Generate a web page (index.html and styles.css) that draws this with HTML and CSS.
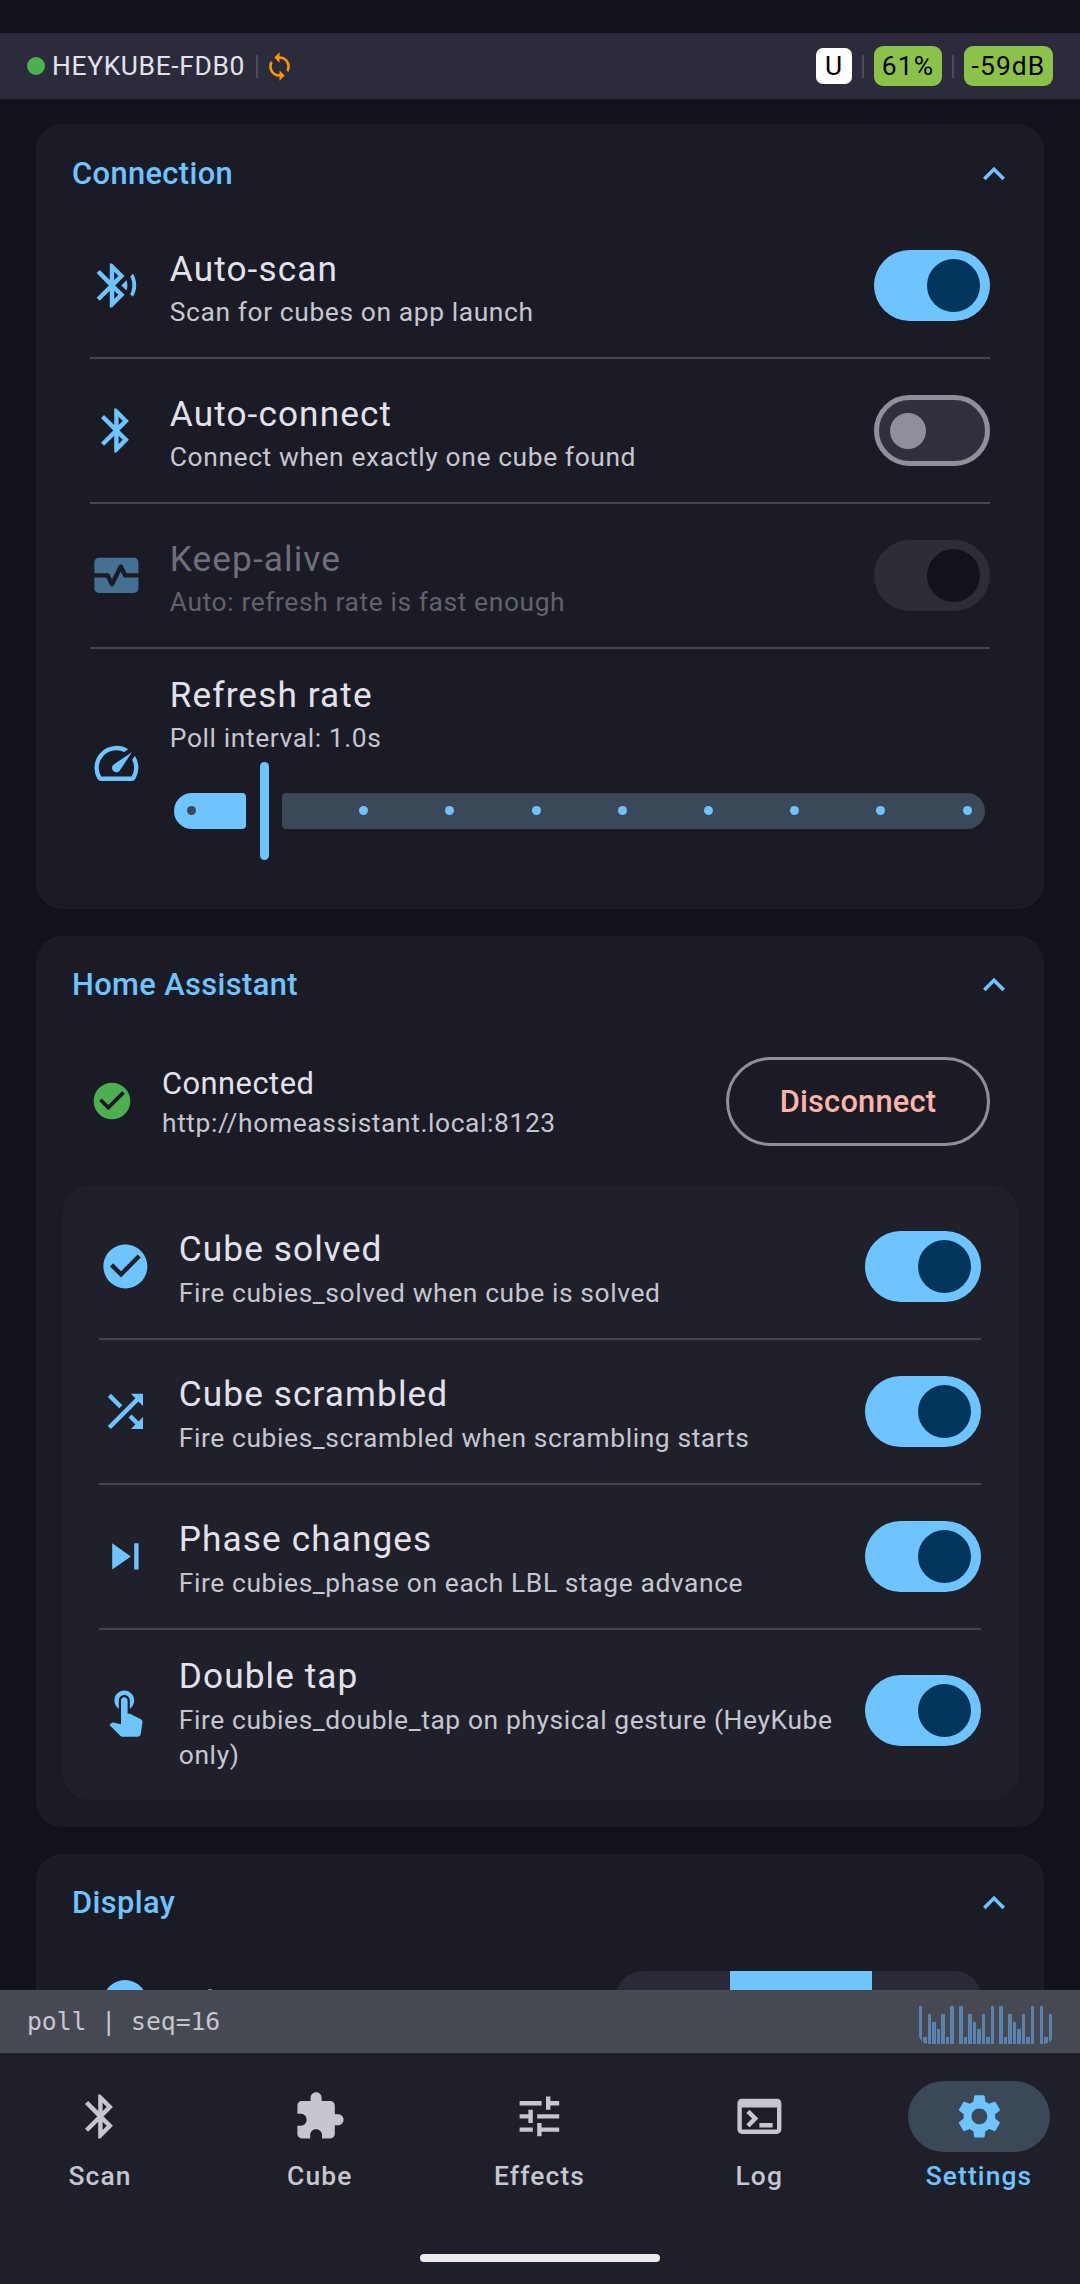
FILE: index.html
```html
<!DOCTYPE html>
<html lang="en">
  <head>
    <meta charset="UTF-8" />
    <meta name="viewport" content="width=device-width, initial-scale=1.0" />
    <title>Settings</title>
    <link rel="stylesheet" href="styles.css">
  </head>
  <body>
    <header class="TopBar">
      <span class="StatusDot"></span>
      <span class="DeviceName">HEYKUBE-FDB0</span>
      <span class="BarDivider"></span>
      <svg class="SyncIcon" viewBox="0 0 24 24"><path d="M12 4V1L8 5l4 4V6c3.31 0 6 2.69 6 6 0 1.01-.25 1.97-.7 2.8l1.46 1.46C19.54 15.03 20 13.57 20 12c0-4.42-3.58-8-8-8zm0 14c-3.31 0-6-2.69-6-6 0-1.01.25-1.97.7-2.8L5.24 7.74C4.46 8.97 4 10.43 4 12c0 4.42 3.58 8 8 8v3l4-4-4-4v3z"/></svg>
      <span class="TopBarRight">
        <span class="Badge BadgeWhite">U</span>
        <span class="BarDivider"></span>
        <span class="Badge BadgeGreen BadgeBattery">61%</span>
        <span class="BarDivider"></span>
        <span class="Badge BadgeGreen BadgeSignal">-59dB</span>
      </span>
    </header>

    <main class="Content">
      <section class="Card">
        <div class="CardHeader">
          <h2 class="CardTitle">Connection</h2>
          <svg class="Chevron" viewBox="0 0 24 24"><path d="M12 8l-6 6 1.41 1.41L12 10.83l4.59 4.58L18 14z"/></svg>
        </div>
        <div class="RowList">
          <div class="Row">
            <svg class="RowIcon" viewBox="0 0 24 24"><path d="M14.24 12.01l2.32 2.32c.28-.72.44-1.51.44-2.33 0-.82-.16-1.59-.43-2.31l-2.33 2.32zm5.29-5.3l-1.26 1.26c.63 1.21.98 2.57.98 4.02s-.36 2.82-.98 4.02l1.2 1.2c.97-1.54 1.54-3.36 1.54-5.31-.01-1.89-.55-3.67-1.48-5.19zm-3.82 1L10 2H9v7.59L4.41 5 3 6.41 8.59 12 3 17.59 4.41 19 9 14.41V22h1l5.71-5.71-4.3-4.29 4.3-4.29zM11 5.83l1.88 1.88L11 9.59V5.83zm1.88 10.46L11 18.17v-3.76l1.88 1.88z"/></svg>
            <div class="RowText">
              <div class="RowTitle">Auto-scan</div>
              <div class="RowSub">Scan for cubes on app launch</div>
            </div>
            <div class="Switch SwitchOn"><span class="Thumb"></span></div>
          </div>
          <div class="Row">
            <svg class="RowIcon" viewBox="0 0 24 24"><path d="M17.71 7.71L12 2h-1v7.59L6.41 5 5 6.41 10.59 12 5 17.59 6.41 19 11 14.41V22h1l5.71-5.71-4.3-4.29 4.3-4.29zM13 5.83l1.88 1.88L13 9.59V5.83zm1.88 10.46L13 18.17v-3.76l1.88 1.88z"/></svg>
            <div class="RowText">
              <div class="RowTitle">Auto-connect</div>
              <div class="RowSub">Connect when exactly one cube found</div>
            </div>
            <div class="Switch SwitchOff"><span class="Thumb"></span></div>
          </div>
          <div class="Row RowDisabled">
            <svg class="RowIcon" viewBox="0 0 24 24"><path d="M15.11 12.45L14 10.24l-3.11 6.21c-.16.34-.51.55-.89.55s-.73-.21-.89-.55L7.38 13H2v5c0 1.1.9 2 2 2h16c1.1 0 2-.9 2-2v-5h-6c-.38 0-.73-.21-.89-.55z"/><path d="M20 4H4c-1.1 0-2 .9-2 2v5h6c.38 0 .73.21.89.55L10 13.76l3.11-6.21c.34-.68 1.45-.68 1.79 0L16.62 11H22V6c0-1.1-.9-2-2-2z"/></svg>
            <div class="RowText">
              <div class="RowTitle">Keep-alive</div>
              <div class="RowSub">Auto: refresh rate is fast enough</div>
            </div>
            <div class="Switch SwitchDisabled"><span class="Thumb"></span></div>
          </div>
          <div class="Row RowSlider">
            <svg class="RowIcon" viewBox="0 0 24 24"><path d="M20.38 8.57l-1.23 1.85a8 8 0 0 1-.22 7.58H5.07A8 8 0 0 1 15.58 6.85l1.85-1.23A10 10 0 0 0 3.35 19a2 2 0 0 0 1.72 1h13.85a2 2 0 0 0 1.74-1 10 10 0 0 0-.27-10.44zm-9.79 6.84a2 2 0 0 0 2.83 0l5.66-8.49-8.49 5.66a2 2 0 0 0 0 2.83z"/></svg>
            <div class="RowText">
              <div class="RowTitle">Refresh rate</div>
              <div class="RowSub">Poll interval: 1.0s</div>
              <div class="Slider">
                <div class="TrackActive"><span class="Dot DotDark"></span></div>
                <div class="Handle"></div>
                <div class="TrackRest">
                  <span class="Dot"></span>
                  <span class="Dot"></span>
                  <span class="Dot"></span>
                  <span class="Dot"></span>
                  <span class="Dot"></span>
                  <span class="Dot"></span>
                  <span class="Dot"></span>
                  <span class="Dot"></span>
                </div>
              </div>
            </div>
          </div>
        </div>
      </section>

      <section class="Card">
        <div class="CardHeader">
          <h2 class="CardTitle">Home Assistant</h2>
          <svg class="Chevron" viewBox="0 0 24 24"><path d="M12 8l-6 6 1.41 1.41L12 10.83l4.59 4.58L18 14z"/></svg>
        </div>
        <div class="ConnectedRow">
          <svg class="ConnectedIcon" viewBox="0 0 24 24"><path d="M12 2C6.48 2 2 6.48 2 12s4.48 10 10 10 10-4.48 10-10S17.52 2 12 2zm-2 15l-5-5 1.41-1.41L10 14.17l7.59-7.59L19 8l-9 9z"/></svg>
          <div class="RowText">
            <div class="ConnectedTitle">Connected</div>
            <div class="RowSub">http://homeassistant.local:8123</div>
          </div>
          <button class="DisconnectBtn">Disconnect</button>
        </div>
        <div class="InnerCard">
          <div class="Row">
            <svg class="RowIcon" viewBox="0 0 24 24"><path d="M12 2C6.48 2 2 6.48 2 12s4.48 10 10 10 10-4.48 10-10S17.52 2 12 2zm-2 15l-5-5 1.41-1.41L10 14.17l7.59-7.59L19 8l-9 9z"/></svg>
            <div class="RowText">
              <div class="RowTitle">Cube solved</div>
              <div class="RowSub">Fire cubies_solved when cube is solved</div>
            </div>
            <div class="Switch SwitchOn"><span class="Thumb"></span></div>
          </div>
          <div class="Row">
            <svg class="RowIcon" viewBox="0 0 24 24"><path d="M10.59 9.17L5.41 4 4 5.41l5.17 5.17 1.42-1.41zM14.5 4l2.04 2.04L4 18.59 5.41 20 17.96 7.46 20 9.5V4h-5.5zm.33 9.41l-1.41 1.41 3.13 3.13L14.5 20H20v-5.5l-2.04 2.04-3.13-3.13z"/></svg>
            <div class="RowText">
              <div class="RowTitle">Cube scrambled</div>
              <div class="RowSub">Fire cubies_scrambled when scrambling starts</div>
            </div>
            <div class="Switch SwitchOn"><span class="Thumb"></span></div>
          </div>
          <div class="Row">
            <svg class="RowIcon" viewBox="0 0 24 24"><path d="M6 18l8.5-6L6 6v12zM16 6v12h2V6h-2z"/></svg>
            <div class="RowText">
              <div class="RowTitle">Phase changes</div>
              <div class="RowSub">Fire cubies_phase on each LBL stage advance</div>
            </div>
            <div class="Switch SwitchOn"><span class="Thumb"></span></div>
          </div>
          <div class="Row">
            <svg class="RowIcon" viewBox="0 0 24 24"><path d="M9 11.24V7.5C9 6.12 10.12 5 11.5 5S14 6.12 14 7.5v3.74c1.21-.81 2-2.18 2-3.74C16 5.01 13.99 3 11.5 3S7 5.01 7 7.5c0 1.56.79 2.93 2 3.74zm9.84 4.63l-4.54-2.26c-.17-.07-.35-.11-.54-.11H13v-6c0-.83-.67-1.5-1.5-1.5S10 6.67 10 7.5v10.74l-3.43-.72c-.08-.01-.15-.03-.24-.03-.31 0-.59.13-.79.33l-.79.8 4.94 4.94c.27.27.65.44 1.06.44h6.79c.75 0 1.33-.55 1.44-1.28l.75-5.27c.01-.07.02-.14.02-.2 0-.62-.38-1.16-.91-1.38z"/></svg>
            <div class="RowText">
              <div class="RowTitle">Double tap</div>
              <div class="RowSub">Fire cubies_double_tap on physical gesture (HeyKube only)</div>
            </div>
            <div class="Switch SwitchOn"><span class="Thumb"></span></div>
          </div>
        </div>
      </section>

      <section class="Card">
        <div class="CardHeader">
          <h2 class="CardTitle">Display</h2>
          <svg class="Chevron" viewBox="0 0 24 24"><path d="M12 8l-6 6 1.41 1.41L12 10.83l4.59 4.58L18 14z"/></svg>
        </div>
        <div class="ThemeRow">
          <span class="ThemeIcon"></span>
          <div class="RowTitle ThemeTitle">Theme</div>
          <div class="Segments">
            <span class="Segment SegmentLeft"></span>
            <span class="Segment SegmentOn"></span>
            <span class="Segment SegmentRight"></span>
          </div>
        </div>
      </section>
    </main>

    <div class="DebugBar">
      <span class="DebugText">poll | seq=16</span>
      <div class="Spark">
        <span style="height:38px"></span><span style="height:7px"></span><span style="height:30px"></span><span style="height:22px"></span><span style="height:15px"></span><span style="height:30px"></span><span style="height:7px"></span><span style="height:38px"></span><span style="height:0"></span>
        <span style="height:38px"></span><span style="height:7px"></span><span style="height:30px"></span><span style="height:22px"></span><span style="height:15px"></span><span style="height:30px"></span><span style="height:7px"></span><span style="height:38px"></span><span style="height:0"></span>
        <span style="height:38px"></span><span style="height:7px"></span><span style="height:30px"></span><span style="height:22px"></span><span style="height:15px"></span><span style="height:30px"></span><span style="height:7px"></span><span style="height:38px"></span><span style="height:0"></span>
        <span style="height:38px"></span><span style="height:7px"></span><span style="height:30px"></span>
      </div>
    </div>

    <nav class="BottomNav">
      <div class="NavItems">
        <a class="NavItem">
          <span class="NavPill"><svg class="NavIcon" viewBox="0 0 24 24"><path d="M17.71 7.71L12 2h-1v7.59L6.41 5 5 6.41 10.59 12 5 17.59 6.41 19 11 14.41V22h1l5.71-5.71-4.3-4.29 4.3-4.29zM13 5.83l1.88 1.88L13 9.59V5.83zm1.88 10.46L13 18.17v-3.76l1.88 1.88z"/></svg></span>
          <span class="NavLabel">Scan</span>
        </a>
        <a class="NavItem">
          <span class="NavPill"><svg class="NavIcon" viewBox="0 0 24 24"><path d="M20.5 11H19V7c0-1.1-.9-2-2-2h-4V3.5C13 2.12 11.88 1 10.5 1S8 2.12 8 3.5V5H4c-1.1 0-1.99.9-1.99 2v3.8H3.5c1.49 0 2.7 1.21 2.7 2.7s-1.21 2.7-2.7 2.7H2V20c0 1.1.9 2 2 2h3.8v-1.5c0-1.49 1.21-2.7 2.7-2.7 1.49 0 2.7 1.21 2.7 2.7V22H17c1.1 0 2-.9 2-2v-4h1.5c1.38 0 2.5-1.12 2.5-2.5S21.88 11 20.5 11z"/></svg></span>
          <span class="NavLabel">Cube</span>
        </a>
        <a class="NavItem">
          <span class="NavPill"><svg class="NavIcon" viewBox="0 0 24 24"><path d="M3 17v2h6v-2H3zM3 5v2h10V5H3zm10 16v-2h8v-2h-8v-2h-2v6h2zM7 9v2H3v2h4v2h2V9H7zm14 4v-2H11v2h10zm-6-4h2V7h4V5h-4V3h-2v6z"/></svg></span>
          <span class="NavLabel">Effects</span>
        </a>
        <a class="NavItem">
          <span class="NavPill"><svg class="NavIcon" viewBox="0 0 24 24"><path d="M20 4H4c-1.11 0-2 .9-2 2v12c0 1.1.89 2 2 2h16c1.1 0 2-.9 2-2V6c0-1.1-.9-2-2-2zm0 14H4V8h16v10zm-2-1h-6v-2h6v2zM7.5 17l-1.41-1.41L8.67 13l-2.59-2.59L7.5 9l4 4-4 4z"/></svg></span>
          <span class="NavLabel">Log</span>
        </a>
        <a class="NavItem NavActive">
          <span class="NavPill"><svg class="NavIcon" viewBox="0 0 24 24"><path d="M19.14 12.94c.04-.3.06-.61.06-.94 0-.32-.02-.64-.07-.94l2.03-1.58c.18-.14.23-.41.12-.61l-1.92-3.32c-.12-.22-.37-.29-.59-.22l-2.39.96c-.5-.38-1.03-.7-1.62-.94l-.36-2.54c-.04-.24-.24-.41-.48-.41h-3.84c-.24 0-.43.17-.47.41l-.36 2.54c-.59.24-1.13.57-1.62.94l-2.39-.96c-.22-.08-.47 0-.59.22L2.74 8.87c-.12.21-.08.47.12.61l2.03 1.58c-.05.3-.09.63-.09.94s.02.64.07.94l-2.03 1.58c-.18.14-.23.41-.12.61l1.92 3.32c.12.22.37.29.59.22l2.39-.96c.5.38 1.03.7 1.62.94l.36 2.54c.05.24.24.41.48.41h3.84c.24 0 .44-.17.47-.41l.36-2.54c.59-.24 1.13-.56 1.62-.94l2.39.96c.22.08.47 0 .59-.22l1.92-3.32c.12-.22.07-.47-.12-.61l-2.01-1.58zM12 15.6c-1.98 0-3.6-1.62-3.6-3.6s1.62-3.6 3.6-3.6 3.6 1.62 3.6 3.6-1.62 3.6-3.6 3.6z"/></svg></span>
          <span class="NavLabel">Settings</span>
        </a>
      </div>
      <div class="HomeBar"></div>
    </nav>
  </body>
</html>
```

FILE: styles.css
```css
* {
  margin: 0;
  padding: 0;
  box-sizing: border-box;
}

body {
  width: 1080px;
  height: 2284px;
  display: flex;
  flex-direction: column;
  overflow: hidden;
  font-family: Roboto, "Noto Sans", sans-serif;
  background-color: #11121a;
  color: #e3e2ec;
  padding-top: 33px;
}

svg {
  fill: currentColor;
  flex-shrink: 0;
  display: block;
}

/* top bar */
.TopBar {
  height: 66px;
  flex-shrink: 0;
  display: flex;
  align-items: center;
  padding: 0 27px;
  background-color: #2b2b3b;
}

.StatusDot {
  width: 18px;
  height: 18px;
  border-radius: 50%;
  background-color: #4caf50;
  margin-right: 7px;
}

.DeviceName {
  font-size: 26.4px;
  letter-spacing: 0.65px;
  color: #e3e2ec;
}

.BarDivider {
  width: 2px;
  height: 23px;
  background-color: #4a4b5a;
  margin: 0 10px;
}

.TopBar > .BarDivider {
  margin: 0 9px 0 11px;
}

.SyncIcon {
  width: 31px;
  height: 31px;
  color: #ff9800;
  margin-left: -3px;
}

.TopBarRight {
  margin-left: auto;
  display: flex;
  align-items: center;
}

.Badge {
  display: flex;
  align-items: center;
  justify-content: center;
  color: #000;
  font-size: 26.4px;
  letter-spacing: 1.1px;
}

.BadgeWhite {
  width: 36px;
  height: 36px;
  background-color: #fff;
  border-radius: 7px;
}

.BadgeGreen {
  height: 40px;
  background-color: #8bc34a;
  border-radius: 9px;
}

.BadgeBattery {
  width: 68px;
}

.BadgeSignal {
  width: 89px;
}

/* scroll area */
.Content {
  flex: 1;
  min-height: 0;
  overflow: hidden;
  padding: 25px 36px 0;
  display: flex;
  flex-direction: column;
  gap: 27px;
}

.Card {
  flex-shrink: 0;
  background-color: #1a1b24;
  border-radius: 26px;
  padding-bottom: 27px;
}

.CardHeader {
  height: 90px;
  display: flex;
  align-items: flex-start;
  justify-content: space-between;
  padding: 27.5px 28px 0 36px;
}

.CardTitle {
  font-size: 30.8px;
  font-weight: 500;
  line-height: 44px;
  letter-spacing: 0.4px;
  color: #6ec4ff;
}

.Chevron {
  width: 44px;
  height: 44px;
  color: #6ec4ff;
}

.RowList {
  padding: 0 54px;
}

.Row {
  min-height: 145px;
  padding: 18.5px 0;
  display: flex;
  align-items: center;
  border-bottom: 2px solid #44454f;
}

.Row:last-child {
  border-bottom: none;
}

.RowIcon {
  width: 52.8px;
  height: 52.8px;
  color: #6ec4ff;
  margin-right: 27px;
}

.RowText {
  flex: 1;
  min-width: 0;
  padding-top: 2px;
}

.RowTitle {
  font-size: 35.2px;
  line-height: 52.8px;
  letter-spacing: 1.1px;
  color: #e3e2ec;
}

.RowSub {
  font-size: 26.4px;
  line-height: 35.2px;
  letter-spacing: 0.6px;
  color: #c6c6d0;
}

.RowDisabled .RowIcon {
  opacity: 0.5;
}

.RowDisabled .RowTitle {
  color: #6f6f79;
}

.RowDisabled .RowSub {
  color: #62626c;
}

/* switches */
.Switch {
  width: 116px;
  height: 71px;
  border-radius: 36px;
  display: flex;
  align-items: center;
  flex-shrink: 0;
}

.Thumb {
  border-radius: 50%;
  display: block;
}

.SwitchOn {
  background-color: #6ec4ff;
  justify-content: flex-end;
  padding-right: 10px;
}

.SwitchOn .Thumb {
  width: 53px;
  height: 53px;
  background-color: #02355b;
}

.SwitchOff {
  background-color: #2f2f3d;
  border: 5px solid #8e8f9a;
  padding-left: 11px;
}

.SwitchOff .Thumb {
  width: 36px;
  height: 36px;
  background-color: #8e8f9a;
}

.SwitchDisabled {
  background-color: #2d2d37;
  justify-content: flex-end;
  padding-right: 10px;
}

.SwitchDisabled .Thumb {
  width: 53px;
  height: 53px;
  background-color: #11121a;
}

/* refresh rate slider */
.RowSlider {
  min-height: 0;
  padding: 17.5px 0 22px;
}

.Slider {
  height: 98px;
  margin: 5px 5px 0 4px;
  display: flex;
  align-items: center;
}

.TrackActive {
  width: 72px;
  height: 36px;
  background-color: #6ec4ff;
  border-radius: 18px 4px 4px 18px;
  display: flex;
  align-items: center;
  padding-left: 13.5px;
}

.Handle {
  width: 9px;
  height: 98px;
  border-radius: 5px;
  background-color: #6ec4ff;
  margin: 0 13px 0 14px;
}

.TrackRest {
  flex: 1;
  height: 36px;
  background-color: #3b4858;
  border-radius: 4px 18px 18px 4px;
  display: flex;
  align-items: center;
  justify-content: space-between;
  padding: 0 13.5px 0 77.5px;
}

.Dot {
  width: 9px;
  height: 9px;
  border-radius: 50%;
  background-color: #6ec4ff;
}

.DotDark {
  background-color: #3b4858;
}

/* home assistant */
.ConnectedRow {
  display: flex;
  align-items: center;
  padding: 31px 54px 40px;
}

.ConnectedIcon {
  width: 44px;
  height: 44px;
  color: #4caf50;
  margin-right: 28px;
}

.ConnectedTitle {
  font-size: 30.8px;
  line-height: 44px;
  letter-spacing: 0.5px;
  color: #e3e2ec;
}

.DisconnectBtn {
  width: 264px;
  height: 89px;
  background: none;
  border: 3px solid #8e8f9a;
  border-radius: 45px;
  font-family: inherit;
  font-size: 30.8px;
  font-weight: 500;
  letter-spacing: 0.22px;
  color: #ffb4ab;
}

.InnerCard {
  margin: 0 26px 0 27px;
  padding: 9px 37px 8px 36px;
  background-color: #1f2029;
  border-radius: 26px;
}

/* display section, cut off by the bars below */
.ThemeRow {
  display: flex;
  align-items: flex-start;
  padding: 27px 63px 0;
}

.ThemeIcon {
  width: 44px;
  height: 44px;
  margin: 9px 0 0 4px;
  border-radius: 50%;
  background-color: #6ec4ff;
}

.ThemeTitle {
  margin: 7px 0 0 37px;
}

.Segments {
  margin-left: auto;
  width: 365px;
  height: 88px;
  display: flex;
}

.Segment {
  background-color: #292938;
}

.SegmentLeft {
  width: 114px;
  border-radius: 26px 0 0 26px;
}

.SegmentOn {
  width: 142px;
  background-color: #6ec4ff;
}

.SegmentRight {
  flex: 1;
  border-radius: 0 26px 26px 0;
}

/* debug strip */
.DebugBar {
  height: 63px;
  flex-shrink: 0;
  display: flex;
  align-items: flex-start;
  justify-content: space-between;
  padding: 0 27px;
  background-color: #464952;
}

.DebugText {
  font-family: "DejaVu Sans Mono", "Liberation Mono", monospace;
  font-size: 24.7px;
  line-height: 63px;
  color: #c6c6d0;
}

.Spark {
  width: 134px;
  height: 38px;
  margin-top: 15.5px;
  display: flex;
  align-items: flex-end;
  gap: 1px;
  overflow: hidden;
  border-radius: 0 0 9px 9px;
}

.Spark span {
  width: 3.47px;
  flex-shrink: 0;
  background-color: #5a82ae;
}

/* bottom navigation */
.BottomNav {
  height: 231px;
  flex-shrink: 0;
  padding-top: 27.5px;
  background-color: #1e1f29;
}

.NavItems {
  display: flex;
  justify-content: space-between;
  padding: 0 30px 0 29px;
}

.NavItem {
  width: 142px;
  display: flex;
  flex-direction: column;
  align-items: center;
  gap: 7.5px;
  color: #c6c6d0;
}

.NavPill {
  width: 142px;
  height: 71px;
  border-radius: 36px;
  display: flex;
  align-items: center;
  justify-content: center;
}

.NavIcon {
  width: 52.8px;
  height: 52.8px;
}

.NavLabel {
  font-size: 26.4px;
  font-weight: 500;
  line-height: 35.2px;
  letter-spacing: 1.1px;
}

.NavActive {
  color: #6ec4ff;
}

.NavActive .NavPill {
  background-color: #3b4858;
}

.HomeBar {
  width: 240px;
  height: 8px;
  margin: 60px auto 0;
  border-radius: 4px;
  background-color: #ececec;
}
```
